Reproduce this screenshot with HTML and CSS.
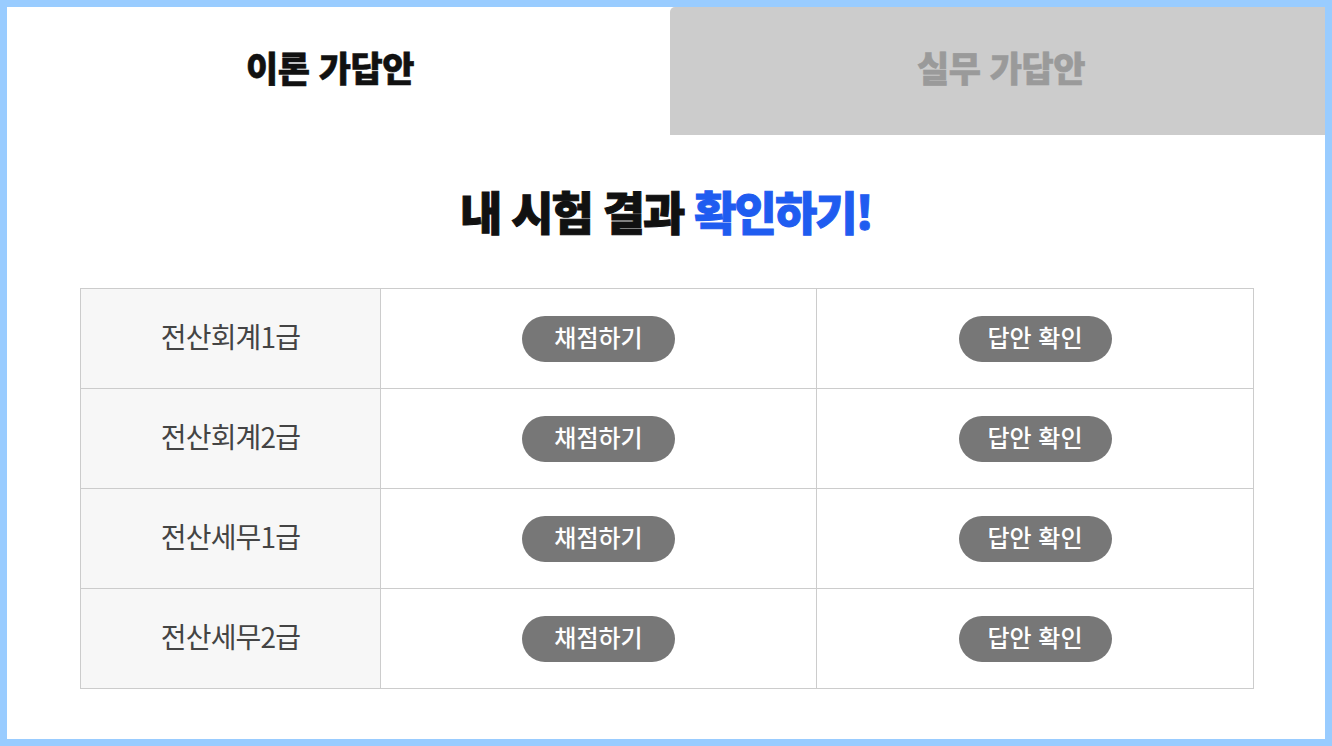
FILE: index.html
```html
<!DOCTYPE html>
<html lang="ko">
<head>
<meta charset="utf-8">
<title>가답안</title>
<link rel="stylesheet" href="styles.css">
</head>
<body>
<div class="frame">
  <div class="tabs">
    <div class="tab tab-active">이론 가답안</div>
    <div class="tab tab-inactive">실무 가답안</div>
  </div>
  <h2 class="heading">내 시험 결과 <span class="accent">확인하기!</span></h2>
  <div class="table-wrap">
    <table class="results">
      <colgroup>
        <col class="c1"><col class="c2"><col class="c3">
      </colgroup>
      <tbody>
        <tr>
          <th>전산회계1급</th>
          <td><a class="btn">채점하기</a></td>
          <td><a class="btn">답안 확인</a></td>
        </tr>
        <tr>
          <th>전산회계2급</th>
          <td><a class="btn">채점하기</a></td>
          <td><a class="btn">답안 확인</a></td>
        </tr>
        <tr>
          <th>전산세무1급</th>
          <td><a class="btn">채점하기</a></td>
          <td><a class="btn">답안 확인</a></td>
        </tr>
        <tr>
          <th>전산세무2급</th>
          <td><a class="btn">채점하기</a></td>
          <td><a class="btn">답안 확인</a></td>
        </tr>
      </tbody>
    </table>
  </div>
</div>
</body>
</html>
```
FILE: styles.css
```css
* { box-sizing: border-box; }
html, body { margin: 0; padding: 0; background: #ffffff; }
body { font-family: "Noto Sans CJK KR", "Noto Sans", sans-serif; }

.frame {
  width: 1332px;
  height: 746px;
  border: 7px solid #99ccff;
  background: #ffffff;
  overflow: hidden;
}

.tabs {
  display: grid;
  grid-template-columns: 663px 1fr;
  height: 128px;
}
.tab {
  display: flex;
  align-items: center;
  justify-content: center;
  font-size: 35px;
  font-weight: 900;
  letter-spacing: -0.5px;
  padding-bottom: 10px;
  -webkit-text-stroke: 0.6px currentColor;
}
.tab-active {
  color: #111111;
  background: #ffffff;
  padding-right: 17px;
}
.tab-inactive {
  color: #9a9a9a;
  background: #cccccc;
  border-top-left-radius: 5px;
  padding-left: 7px;
}

.heading {
  margin: 49px 0 52px;
  text-align: center;
  font-size: 46px;
  line-height: 52px;
  font-weight: 900;
  letter-spacing: -2px;
  color: #111111;
  -webkit-text-stroke: 1px #111111;
}
.accent {
  color: #1f5cf0;
  -webkit-text-stroke: 1px #1f5cf0;
}

.table-wrap {
  padding: 0 72px 0 73px;
}
.results {
  width: 100%;
  border-collapse: collapse;
  table-layout: fixed;
}
.c1 { width: 300px; }
.c2 { width: 436px; }
.c3 { width: 437px; }
.results tr { height: 100px; }
.results th,
.results td {
  border: 1px solid #cccccc;
  text-align: center;
  vertical-align: middle;
  padding: 0;
}
.results th {
  background: #f7f7f7;
  color: #444444;
  font-size: 28px;
  font-weight: 400;
  letter-spacing: -0.8px;
  padding-bottom: 5px;
}
.btn {
  display: inline-flex;
  align-items: center;
  justify-content: center;
  width: 153px;
  height: 46px;
  border-radius: 23px;
  background: #777777;
  color: #ffffff;
  font-size: 24px;
  font-weight: 500;
  letter-spacing: 0;
  padding-bottom: 4px;
}
```
